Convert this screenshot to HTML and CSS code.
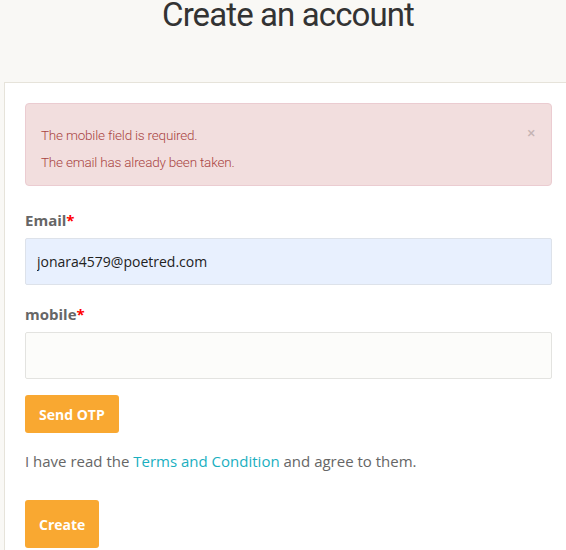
FILE: index.html
```html
<!DOCTYPE html>
<html>
<head>
<meta charset="utf-8">
<link rel="stylesheet" href="styles.css">
</head>
<body>
<header class="page-head">
  <h1 class="title">Create an account</h1>
</header>
<main class="card">
  <div class="alert">
    <span class="alert-close">&times;</span>
    <p class="alert-line">The mobile field is required.</p>
    <p class="alert-line">The email has already been taken.</p>
  </div>
  <div class="field field-email">
    <label class="label">Email<span class="req">*</span></label>
    <input class="input input-filled" type="text" value="jonara4579@poetred.com">
  </div>
  <div class="field field-mobile">
    <label class="label">mobile<span class="req">*</span></label>
    <input class="input" type="text" value="">
  </div>
  <button class="btn btn-otp">Send OTP</button>
  <p class="terms">I have read the <a class="link" href="#">Terms and Condition</a> and agree to them.</p>
  <button class="btn btn-create">Create</button>
</main>
</body>
</html>
```

FILE: styles.css
```css
html, body {
  margin: 0;
  padding: 0;
}
body {
  background: #f9f8f5;
  font-family: "Open Sans", "Liberation Sans", sans-serif;
  overflow: hidden;
  height: 550px;
}
.page-head {
  height: 82px;
  display: flex;
  justify-content: center;
  padding-left: 10px;
}
.title {
  margin: -2px 0 0 0;
  font-family: Roboto, "Liberation Sans", sans-serif;
  font-weight: 400;
  font-size: 33px;
  line-height: 33px;
  color: #333;
  letter-spacing: -0.9px;
}
.card {
  box-sizing: border-box;
  margin-left: 4px;
  background: #fff;
  border-left: 1px solid #e6e3da;
  border-top: 1px solid #e6e3da;
  padding: 20px 14px 0 20px;
  height: 468px;
}
.alert {
  position: relative;
  background: #f2dede;
  border: 1px solid #ebccd1;
  border-radius: 4px;
  padding: 18px 15px 9px 15px;
  color: #a94442;
  font-family: Roboto, "Liberation Sans", sans-serif;
  font-weight: 300;
  font-size: 13.5px;
  letter-spacing: -0.2px;
}
.alert-line {
  margin: 0;
  line-height: 27px;
}
.alert-close {
  position: absolute;
  right: 16px;
  top: 19px;
  font-size: 15px;
  color: #c5b3b3;
  line-height: 20px;
  font-weight: 400;
}
.field {
  display: flex;
  flex-direction: column;
}
.field-email {
  margin-top: 24px;
}
.field-mobile {
  margin-top: 19px;
}
.label {
  font-weight: 700;
  font-size: 15px;
  line-height: 21px;
  color: #666;
  margin-bottom: 7px;
}
.req {
  color: #f00;
}
.input {
  box-sizing: border-box;
  height: 47px;
  border: 1px solid #e3e3e0;
  border-radius: 2px;
  background: #fcfcfa;
  padding: 0 11px;
  font-family: "Open Sans", "Liberation Sans", sans-serif;
  font-size: 14px;
  color: #222;
  outline: none;
}
.input-filled {
  background: #e8f0fe;
  border-color: #dde2ea;
}
.btn {
  display: block;
  border: none;
  background: #f9a831;
  color: #fff;
  font-family: "Open Sans", "Liberation Sans", sans-serif;
  font-weight: 700;
  font-size: 14px;
  border-radius: 3px;
  padding: 0 14px;
}
.btn-otp {
  margin-top: 16px;
  height: 38px;
}
.btn-create {
  margin-top: 28px;
  height: 48px;
}
.terms {
  margin: 17px 0 0 0;
  font-size: 15px;
  line-height: 22px;
  color: #666;
}
.link {
  color: #1aafbf;
  text-decoration: none;
}
```
